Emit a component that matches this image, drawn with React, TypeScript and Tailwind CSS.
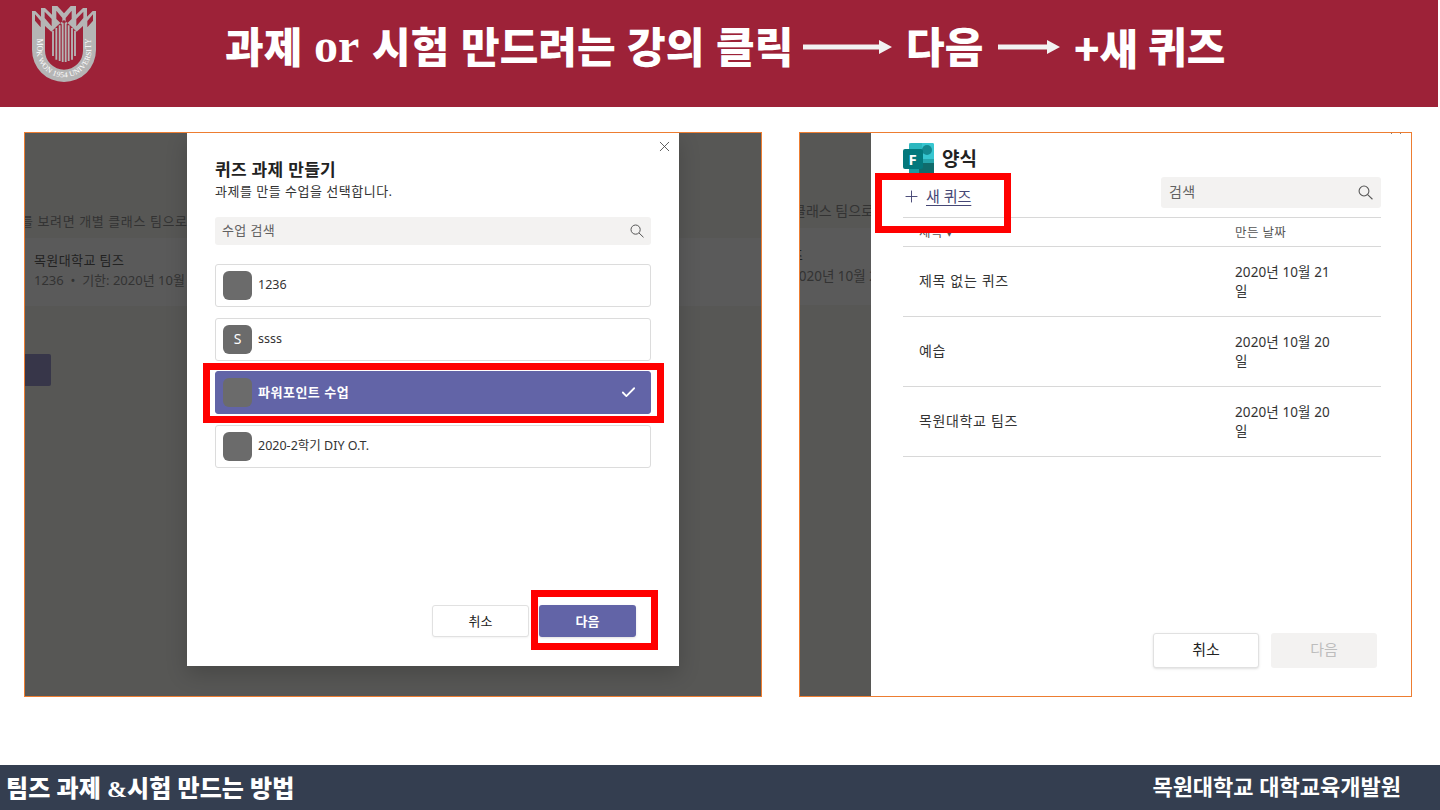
import type { ReactNode } from 'react';
import { Check, Plus, X } from 'lucide-react';

interface Course {
  name: string;
  letter?: string;
  selected?: boolean;
}

interface Quiz {
  title: string;
  date: string;
}

const courses: Course[] = [
  { name: '1236' },
  { name: 'ssss', letter: 'S' },
  { name: '파워포인트 수업', selected: true },
  { name: '2020-2학기 DIY O.T.' },
];

const quizzes: Quiz[] = [
  { title: '제목 없는 퀴즈', date: '2020년 10월 21일' },
  { title: '예습', date: '2020년 10월 20일' },
  { title: '목원대학교 팀즈', date: '2020년 10월 20일' },
];

function Logo() {
  return (
    <svg className="h-[76px] w-16 shrink-0" viewBox="36 18 192 228">
      <path
        fill="#b5b5b5"
        fillRule="evenodd"
        d="M36 33h10l17 17V24h12l21 20V18h16l20 22 20-22h16v26l21-20h12v26l17-17h10v117a96 96 0 0 1-192 0zM75 78v74a57 57 0 0 0 114 0V78l-19 17-18-18-20-17-20 17-18 18zM45 43v19l17 20V63zM74 35v19l21 25V57zM109 32v25l18 17V54zM155 32v25l-18 17V54zM190 35v19l-21 25V57zM219 43v19l-17 20V63z"
      />
      <path
        stroke="#b5b5b5"
        strokeWidth="5.500"
        d="M99 92v76M109 84v95M119 76v107M128 68v118M137 68v118M146 76v107M156 84v95M165 92v76"
      />
      <path id="ring" fill="none" d="M50 116v34a82 82 0 0 0 164 0v-38" />
      <text className="font-['Liberation_Serif',serif] text-[23px]" fill="#fff">
        <textPath href="#ring" textLength="326">MOK WON 1954 UNIVERSITY</textPath>
      </text>
    </svg>
  );
}

function Arrow({ length }: { length: number }) {
  return (
    <svg width={length} height="14" viewBox={`0 0 ${length} 14`} className="shrink-0">
      <path fill="#f2f2f2" d={`M0 4.5H${length - 13}V0L${length} 7L${length - 13} 14V9.5H0z`} />
    </svg>
  );
}

function SearchIcon({ className }: { className: string }) {
  return (
    <svg className={className} viewBox="0 0 14 14" fill="none" stroke="#555" strokeWidth="1">
      <circle cx="5.6" cy="5.6" r="4.6" />
      <path d="M9 9l4.500 4.300" />
    </svg>
  );
}

function FormsLogo() {
  return (
    <svg className="h-[31px] w-8 shrink-0" viewBox="0 0 32 31">
      <path fill="#37c6d0" d="M8 0h22a1.500 1.500 0 0 1 1 1.500V16H6V2a2 2 0 0 1 2-2z" />
      <path fill="#1a9ba1" d="M6 15h10v16H6z" />
      <path fill="#1a9ba1" d="M6 0h13v16H6z" opacity="0.35" />
      <path fill="#106b6b" d="M16 17h15v14H16z" />
      <circle cx="24" cy="7" r="5" fill="#148a91" />
      <path fill="#25a5ab" d="M20 16h11v4H20z" />
      <rect y="6" width="20" height="20" rx="2" fill="#03787c" />
      <text x="5.500" y="21.500" fill="#fff" className="font-['Open_Sans',sans-serif] text-[15px] font-bold">
        F
      </text>
    </svg>
  );
}

function Word({ className, children }: { className: string; children: ReactNode }) {
  return <span className={`shrink-0 whitespace-nowrap pt-1 ${className}`}>{children}</span>;
}

function Header() {
  return (
    <header className="flex h-[107px] w-[1438px] bg-[#9d2238] pl-8 pt-1.5">
      <Logo />
      <h1 className="ml-[129px] flex h-[82px] items-center font-['Liberation_Serif','Noto_Sans_CJK_KR',serif] text-[42px] font-black leading-none text-white">
        <Word className="w-[89px]">과제</Word>
        <Word className="w-[58px] pb-1.5 text-[48px]">or</Word>
        <Word className="w-[89px]">시험</Word>
        <Word className="w-[166px]">만드려는</Word>
        <Word className="w-[89px]">강의</Word>
        <Word className="w-[87px]">클릭</Word>
        <Arrow length={89} />
        <Word className="ml-[14px] w-[92px]">다음</Word>
        <Arrow length={62} />
        <Word className="ml-[14px] w-[74px]">
          <span className="font-['Noto_Sans_CJK_KR',sans-serif]">+</span>새
        </Word>
        <Word className="">퀴즈</Word>
      </h1>
    </header>
  );
}

function CourseRow({ course }: { course: Course }) {
  return (
    <li
      className={`flex h-[43px] items-center rounded-[3px] border px-[7px] ${
        course.selected
          ? 'border-[#6264a7] bg-[#6264a7] text-[13px] font-bold tracking-[0.5px] text-white'
          : 'border-[#dcdcdc] bg-white text-[12.5px] text-[#333]'
      }`}
    >
      <span className="flex size-[29px] items-center justify-center rounded-[6px] bg-[#6b6b6b] text-sm text-white">
        {course.letter}
      </span>
      <span className="ml-1.5">{course.name}</span>
      {course.selected && <Check className="ml-auto mr-1.5 size-[17px] text-white" strokeWidth={2.5} />}
    </li>
  );
}

function CoursePanel() {
  return (
    <section className="relative h-[565px] w-[738px] overflow-hidden border border-[#ed7d31] bg-[#575755]">
      {/* dimmed assignments page behind the dialog */}
      <div className="w-full whitespace-nowrap text-[13px] leading-5 text-[#333]">
        <p className="-ml-[4px] h-[105px] pt-[78px] tracking-[0.6px]">를 보려면 개별 클래스 팀으로</p>
        <div className="h-[68px] bg-[#5a5a5a] pl-[9px] pt-3">
          <p className="tracking-[0.4px] text-[#222]">목원대학교 팀즈</p>
          <p>1236&nbsp; •&nbsp; 기한: 2020년 10월 21일</p>
        </div>
        <div className="mt-12 h-8 w-[26px] rounded-r-[2px] bg-[#373649]" />
      </div>

      <div className="absolute left-[162px] top-0 flex h-[533px] w-[492px] flex-col bg-white pl-7 pr-7 shadow-[0_8px_20px_rgba(0,0,0,0.18)]">
        <X className="absolute right-[6px] top-[5px] size-[17px] text-[#444]" strokeWidth={1.2} />
        <h2 className="mt-[25px] text-[17px] font-bold leading-6 tracking-[0.3px] text-[#222]">퀴즈 과제 만들기</h2>
        <p className="text-[13px] leading-[18px] tracking-[0.5px] text-[#333]">과제를 만들 수업을 선택합니다.</p>
        <div className="mt-[17px] flex h-7 items-center justify-between rounded-[3px] bg-[#f3f2f1] px-[7px] text-[13px] tracking-[0.4px] text-[#616161]">
          <span>수업 검색</span>
          <SearchIcon className="size-3.5" />
        </div>
        <ul className="mt-[19px] flex flex-col gap-[10.7px]">
          {courses.map((course) => (
            <CourseRow key={course.name} course={course} />
          ))}
        </ul>
        <div className="mb-[29px] mr-[15px] mt-auto flex justify-end gap-2.5 text-[13px]">
          <button className="h-8 w-[97px] rounded-[3px] border border-[#e1e1e1] bg-white pt-px text-[#222] shadow-xs">취소</button>
          <button className="h-8 w-[97px] rounded-[3px] bg-[#6264a7] pt-px font-bold text-white shadow-sm">다음</button>
        </div>
      </div>

      <div className="absolute left-[178px] top-[230px] h-[60px] w-[461px] border-[7px] border-[#ff0000]" />
      <div className="absolute left-[506px] top-[457px] h-[60px] w-[127px] border-[7px] border-[#ff0000]" />
    </section>
  );
}

function QuizPanel() {
  return (
    <section className="relative h-[565px] w-[613px] overflow-hidden border border-[#ed7d31] bg-[#575755]">
      {/* only the tail of the dimmed page shows left of the dialog */}
      <div className="w-full whitespace-nowrap text-[14px] leading-5 text-[#333]">
        <p className="-ml-[7px] h-[95px] pt-[68px]">클래스 팀으로</p>
        <div className="h-[77px] bg-[#5a5a5a] pt-[17px]">
          <p className="-ml-[10px] text-[#222]">즈</p>
          <p className="-ml-[9px] pt-px text-[13.5px]">2020년 10월 21일</p>
        </div>
      </div>

      <div className="absolute left-[71px] top-0 flex h-[563px] w-[540px] flex-col bg-white pl-8 pr-[30px]">
        <X className="absolute -top-[13px] right-[6px] size-[18px] text-[#444]" strokeWidth={1.2} />
        <div className="flex h-[84px] justify-between">
          <div className="pt-2.5">
            <h2 className="flex items-center text-[19px] font-bold leading-none text-[#222]">
              <FormsLogo />
              <span className="ml-[7px] pt-0.5">양식</span>
            </h2>
            <div className="mt-3 flex h-5 items-center text-[#464775]">
              <Plus className="-ml-px size-[19px]" strokeWidth={1.2} />
              <span className="ml-[5px] text-[15px] underline underline-offset-[3px]">새 퀴즈</span>
            </div>
          </div>
          <div className="mt-11 flex h-[31px] w-[220px] items-center justify-between rounded-[3px] bg-[#f3f2f1] px-2 text-[14px] tracking-[0.3px] text-[#616161]">
            <span className="pb-0.5">검색</span>
            <SearchIcon className="size-[15px]" />
          </div>
        </div>

        <div className="flex h-[30px] items-center border-y border-[#d8d8d8] pl-4 text-[12.5px] tracking-[0.4px] text-[#555]">
          <span className="w-[316px] pt-0.5">제목 ▾</span>
          <span className="pt-0.5">만든 날짜</span>
        </div>
        {quizzes.map((quiz) => (
          <div key={quiz.title} className="flex h-[70px] items-center border-b border-[#d8d8d8] pl-4 text-[14px] text-[#333]">
            <span className="w-[316px] pb-0.5 tracking-[0.65px]">{quiz.title}</span>
            <span className="w-[100px] break-all text-[13.5px] leading-[19px] tracking-[0.1px]">{quiz.date}</span>
          </div>
        ))}

        <div className="mb-7 mr-1 mt-auto flex justify-end gap-3 text-[15px]">
          <button className="h-[35px] w-[106px] rounded-[3px] border border-[#e1e1e1] bg-white pb-0.5 text-[#222] shadow-sm">취소</button>
          <button className="h-[35px] w-[106px] rounded-[3px] bg-[#f3f2f1] pb-0.5 text-[#bdbdbd]">다음</button>
        </div>
      </div>

      <div className="absolute left-[75px] top-[40px] h-[60px] w-[136px] border-[7px] border-[#ff0000]" />
    </section>
  );
}

export default function App() {
  return (
    <div className="flex h-[810px] w-[1440px] flex-col overflow-hidden bg-white font-['Noto_Sans','Noto_Sans_CJK_KR',sans-serif]">
      <Header />
      <main className="flex flex-1 gap-[37px] pl-6 pt-[25px]">
        <CoursePanel />
        <QuizPanel />
      </main>
      <footer className="flex h-[45px] items-center justify-between bg-[#343e50] pl-1.5 pr-[39px] text-white">
        <span className="pt-0.5 font-['Liberation_Serif','Noto_Sans_CJK_KR',serif] text-[24px] font-black leading-none tracking-[0.1px]">
          팀즈 과제 &amp;시험 만드는 방법
        </span>
        <span className="pb-1 text-[22px] font-bold leading-none">목원대학교 대학교육개발원</span>
      </footer>
    </div>
  );
}
